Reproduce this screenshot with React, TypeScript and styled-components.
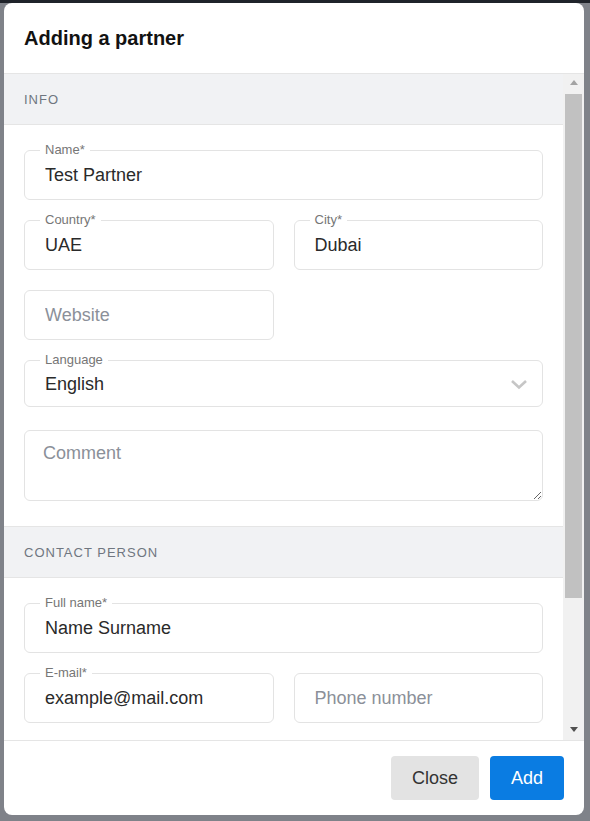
import styled, { createGlobalStyle } from 'styled-components';

const GlobalStyle = createGlobalStyle`
  * { box-sizing: border-box; }
  html, body { margin: 0; padding: 0; }
  body {
    font-family: 'Liberation Sans', Arial, sans-serif;
    background: #7f8289;
  }
`;

export default function App() {
  return (
    <>
      <GlobalStyle />
      <Backdrop>
        <Modal>
          <Header>
            <Title>Adding a partner</Title>
          </Header>
          <Body>
            <Viewport>
              <SectionHead>Info</SectionHead>
              <SectionBody>
                <Field>
                  <FloatLabel>Name*</FloatLabel>
                  <TextInput defaultValue="Test Partner" />
                </Field>
                <Row>
                  <Field>
                    <FloatLabel>Country*</FloatLabel>
                    <TextInput defaultValue="UAE" />
                  </Field>
                  <Field>
                    <FloatLabel>City*</FloatLabel>
                    <TextInput defaultValue="Dubai" />
                  </Field>
                </Row>
                <Row>
                  <Field>
                    <TextInput placeholder="Website" />
                  </Field>
                </Row>
                <Field $height={47} $after={3}>
                  <FloatLabel>Language</FloatLabel>
                  <SelectInput defaultValue="en">
                    <option value="en">English</option>
                    <option value="ru">Russian</option>
                    <option value="ar">Arabic</option>
                  </SelectInput>
                  <Chevron width="18" height="12" viewBox="0 0 18 12">
                    <polyline points="2,3 9,9.5 16,3" fill="none" stroke="#c6c6c6" strokeWidth="2.6" />
                  </Chevron>
                </Field>
                <CommentArea placeholder="Comment" />
              </SectionBody>

              <SectionHead>Contact person</SectionHead>
              <SectionBody>
                <Field>
                  <FloatLabel>Full name*</FloatLabel>
                  <TextInput defaultValue="Name Surname" />
                </Field>
                <Row>
                  <Field>
                    <FloatLabel>E-mail*</FloatLabel>
                    <TextInput defaultValue="example@mail.com" />
                  </Field>
                  <Field>
                    <TextInput placeholder="Phone number" />
                  </Field>
                </Row>
                <Row>
                  <Field>
                    <TextInput placeholder="Position" />
                  </Field>
                  <Field>
                    <TextInput placeholder="Telegram" />
                  </Field>
                </Row>
              </SectionBody>
            </Viewport>
            <ScrollTrack>
              <ScrollButton>
                <Arrow $dir="up" />
              </ScrollButton>
              <Thumb />
              <ScrollButton $end>
                <Arrow $dir="down" />
              </ScrollButton>
            </ScrollTrack>
          </Body>
          <Footer>
            <Button $variant="secondary">Close</Button>
            <Button $variant="primary">Add</Button>
          </Footer>
        </Modal>
      </Backdrop>
    </>
  );
}

const Backdrop = styled.div`
  min-height: 100vh;
  padding: 3px 0 0 4px;
  background: linear-gradient(#1f232a 0 3px, #7f8289 3px);
`;

const Modal = styled.div`
  width: 580px;
  height: 812px;
  background: #fff;
  border-radius: 8px;
  overflow: hidden;
  display: flex;
  flex-direction: column;
`;

const Header = styled.header`
  flex: none;
  height: 71px;
  display: flex;
  align-items: center;
  padding: 0 20px;
  border-bottom: 1px solid #e5e5e5;
`;

const Title = styled.h2`
  margin: 0;
  font-size: 20px;
  font-weight: 700;
  color: #121212;
`;

const Body = styled.div`
  flex: 1;
  min-height: 0;
  display: flex;
  border-bottom: 1px solid #e5e5e5;
`;

const Viewport = styled.div`
  flex: 1;
  min-width: 0;
  overflow: hidden;
`;

const SectionHead = styled.div`
  height: 52px;
  display: flex;
  align-items: center;
  padding: 0 20px;
  background: #f1f2f4;
  border-top: 1px solid #e5e5e5;
  border-bottom: 1px solid #e5e5e5;
  font-size: 13px;
  letter-spacing: 1px;
  text-transform: uppercase;
  color: #6f7680;

  &:first-child {
    height: 51px;
    border-top: none;
  }
`;

const SectionBody = styled.div`
  display: flex;
  flex-direction: column;
  gap: 20px;
  padding: 25px 20px;
`;

const Row = styled.div`
  display: grid;
  grid-template-columns: 1fr 1fr;
  gap: 20px;
`;

const Field = styled.div<{ $height?: number; $after?: number }>`
  position: relative;
  height: ${({ $height }) => $height ?? 50}px;
  margin-bottom: ${({ $after }) => $after ?? 0}px;
  border: 1px solid #e3e3e3;
  border-radius: 6px;
  display: flex;
  align-items: center;
`;

const FloatLabel = styled.span`
  position: absolute;
  top: -9px;
  left: 15px;
  padding: 0 5px;
  background: #fff;
  font-size: 13px;
  line-height: 15px;
  color: #767676;
`;

const TextInput = styled.input`
  width: 100%;
  height: 100%;
  border: 0;
  outline: 0;
  background: transparent;
  padding: 0 18px 0 20px;
  font-family: inherit;
  font-size: 18px;
  color: #2a2a2a;

  &::placeholder {
    color: #8b9099;
  }
`;

const SelectInput = styled.select`
  width: 100%;
  height: 100%;
  border: 0;
  outline: 0;
  background: transparent;
  appearance: none;
  padding: 0 48px 0 20px;
  font-family: inherit;
  font-size: 18px;
  color: #2a2a2a;
`;

const Chevron = styled.svg`
  position: absolute;
  right: 14px;
  top: 50%;
  margin-top: -6px;
  pointer-events: none;
`;

const CommentArea = styled.textarea`
  display: block;
  width: 100%;
  height: 71px;
  border: 1px solid #e3e3e3;
  border-radius: 6px;
  outline: 0;
  resize: vertical;
  padding: 11px 18px;
  font-family: inherit;
  font-size: 18px;
  line-height: 22px;
  color: #2a2a2a;

  &::placeholder {
    color: #8b9099;
  }
`;

const ScrollTrack = styled.div`
  flex: none;
  width: 21px;
  display: flex;
  flex-direction: column;
  padding: 0 2px;
  background: #f1f1f1;
`;

const ScrollButton = styled.div<{ $end?: boolean }>`
  flex: none;
  height: 17px;
  display: flex;
  align-items: center;
  justify-content: center;
  margin-top: ${({ $end }) => ($end ? 'auto' : '0')};
  margin-bottom: ${({ $end }) => ($end ? '2px' : '0')};
`;

const Arrow = styled.span<{ $dir: 'up' | 'down' }>`
  width: 0;
  height: 0;
  border-left: 4.5px solid transparent;
  border-right: 4.5px solid transparent;
  ${({ $dir }) =>
    $dir === 'up'
      ? 'border-bottom: 5px solid #a3a3a3;'
      : 'border-top: 5px solid #505050;'}
`;

const Thumb = styled.div`
  flex: none;
  height: 504px;
  margin-top: 3px;
  background: #c1c1c1;
`;

const Footer = styled.footer`
  flex: none;
  height: 74px;
  display: flex;
  align-items: center;
  justify-content: flex-end;
  gap: 11px;
  padding: 0 20px;
`;

const Button = styled.button<{ $variant: 'primary' | 'secondary' }>`
  height: 44px;
  padding: 0 21px;
  border: 0;
  border-radius: 4px;
  font-family: inherit;
  font-size: 18px;
  cursor: pointer;
  background: ${({ $variant }) => ($variant === 'primary' ? '#0a7ce2' : '#e3e3e3')};
  color: ${({ $variant }) => ($variant === 'primary' ? '#ffffff' : '#333333')};
`;
